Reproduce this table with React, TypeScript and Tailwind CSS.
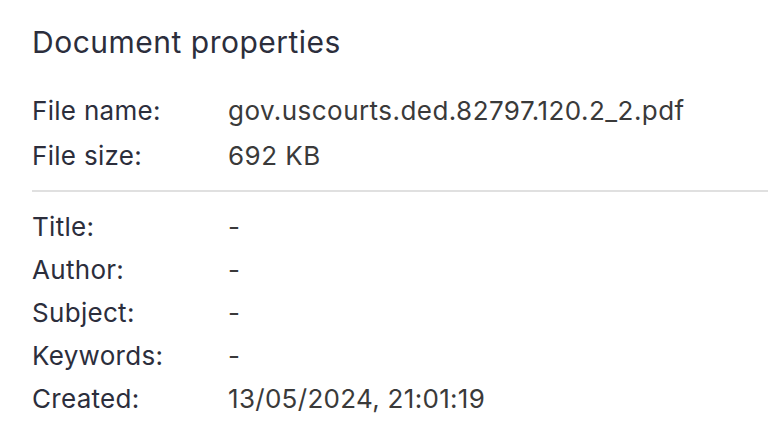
export default function App() {
  const fileRows = [
    { label: "File name:", value: "gov.uscourts.ded.82797.120.2_2.pdf" },
    { label: "File size:", value: "692 KB" },
  ];
  const metaRows = [
    { label: "Title:", value: "-" },
    { label: "Author:", value: "-" },
    { label: "Subject:", value: "-" },
    { label: "Keywords:", value: "-" },
    { label: "Created:", value: "13/05/2024, 21:01:19" },
  ];

  return (
    <div className="w-[768px] h-[423px] bg-white pl-8 pt-[22px] font-['Inter',sans-serif] overflow-hidden">
      {/* Heading */}
      <h2 className="text-[30px] leading-[40px] text-[#2c2e3c] tracking-[0.5px]">
        Document properties
      </h2>

      {/* File info */}
      <div className="mt-[26px] pb-[12px]">
        {fileRows.map((row) => (
          <div key={row.label} className="flex h-[45px] items-center text-[26px] tracking-[0.3px]">
            <span className="w-[196px] text-[#2c2e3c]">{row.label}</span>
            <span className="text-[#3a3a3a] tracking-[0.45px]">{row.value}</span>
          </div>
        ))}
      </div>

      <hr className="border-t-2 border-[#e0e0e0]" />

      {/* Metadata */}
      <div className="pt-[13px]">
        {metaRows.map((row) => (
          <div key={row.label} className="flex h-[43px] items-center text-[26px] tracking-[0.3px]">
            <span className="w-[196px] text-[#2c2e3c]">{row.label}</span>
            <span className="text-[#3a3a3a]">{row.value}</span>
          </div>
        ))}
      </div>
    </div>
  );
}
